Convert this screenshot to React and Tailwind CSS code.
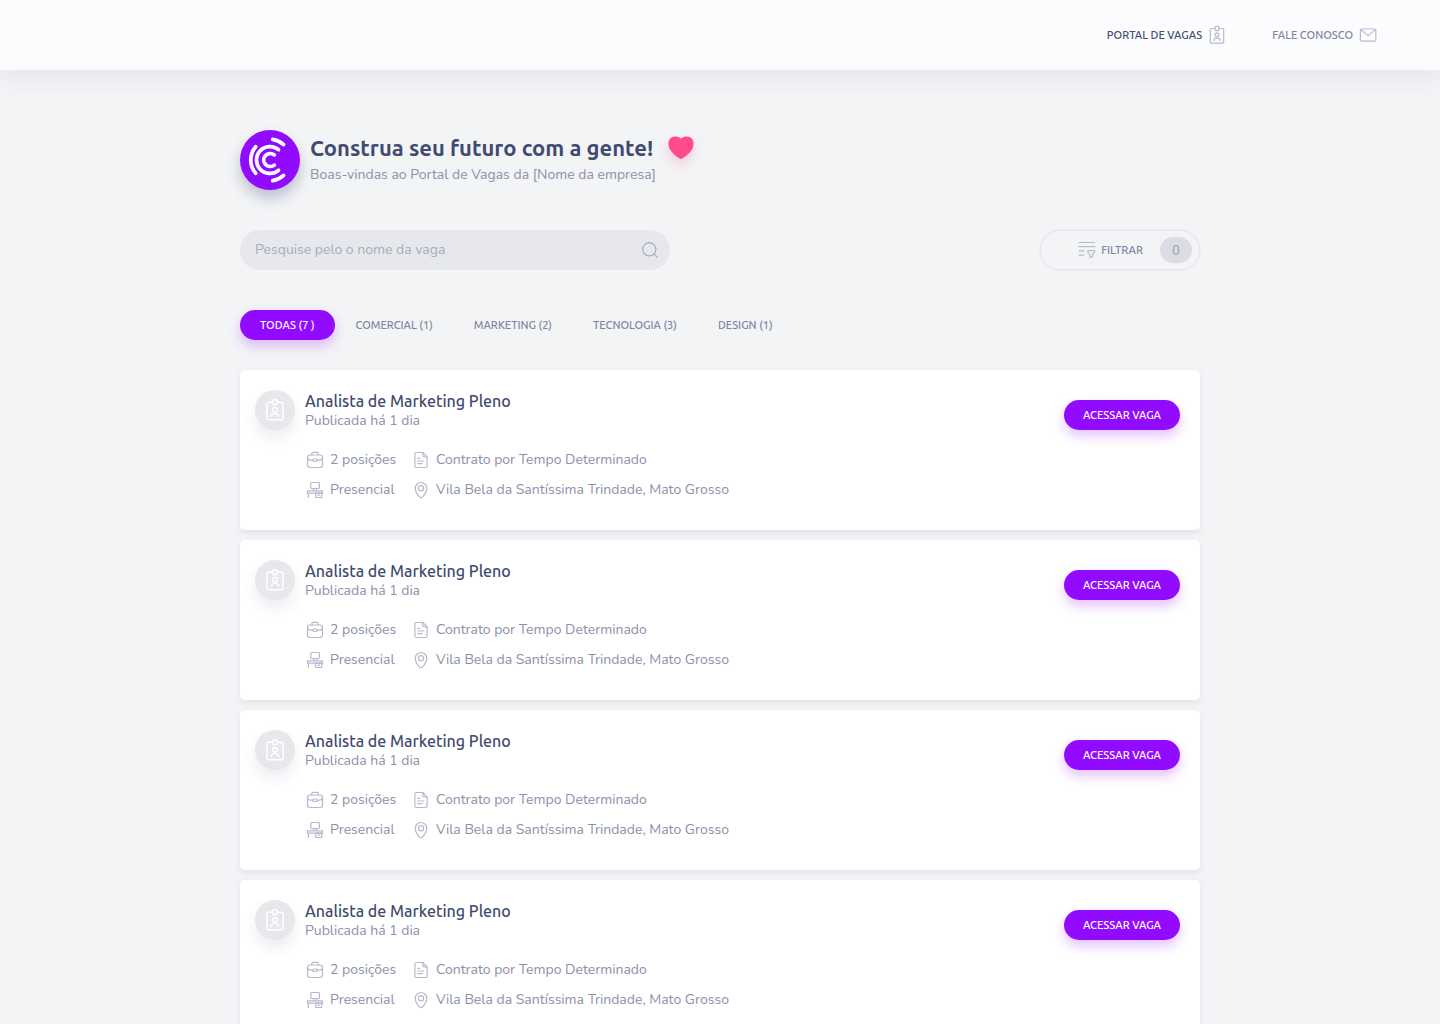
import React, { useState } from 'react';

const TABS = [
    { id: 'todas', label: 'TODAS (7 )' },
    { id: 'comercial', label: 'COMERCIAL (1)' },
    { id: 'marketing', label: 'MARKETING (2)' },
    { id: 'tecnologia', label: 'TECNOLOGIA (3)' },
    { id: 'design', label: 'DESIGN (1)' },
];

const JOBS = Array.from({ length: 4 }, (_, i) => ({
    id: i + 1,
    title: 'Analista de Marketing Pleno',
    published: 'Publicada há 1 dia',
    positions: '2 posições',
    contract: 'Contrato por Tempo Determinado',
    mode: 'Presencial',
    place: 'Vila Bela da Santíssima Trindade, Mato Grosso',
}));

function Icon({ children, className = 'w-5 h-5 text-[#b7bacd]' }) {
    return (
        <svg
            viewBox="0 0 20 20"
            className={`shrink-0 ${className}`}
            fill="none"
            stroke="currentColor"
            strokeWidth="1.2"
            strokeLinecap="round"
            strokeLinejoin="round"
            aria-hidden="true"
        >
            {children}
        </svg>
    );
}

function BadgeIcon({ className }) {
    return (
        <Icon className={className}>
            <path d="M8 3.5H4.6a1.3 1.3 0 0 0-1.3 1.3v12a1.3 1.3 0 0 0 1.3 1.3h10.8a1.3 1.3 0 0 0 1.3-1.3v-12a1.3 1.3 0 0 0-1.3-1.3H12" />
            <rect x="8.1" y="1.4" width="3.8" height="4.2" rx="1.2" />
            <circle cx="10" cy="9.8" r="1.9" />
            <path d="M6.8 15.3c.3-1.7 1.5-2.5 3.2-2.5s2.9.8 3.2 2.5" />
        </Icon>
    );
}

function MailIcon() {
    return (
        <Icon>
            <rect x="2.4" y="4" width="15.4" height="12.2" rx="1.2" />
            <path d="m2.8 4.6 6.5 5.5a1.2 1.2 0 0 0 1.6 0l6.5-5.5" />
        </Icon>
    );
}

function BriefcaseIcon() {
    return (
        <Icon>
            <rect x="2.5" y="5" width="15" height="12.5" rx="2.4" />
            <path d="M6.8 5V3.6c0-.7.5-1.2 1.2-1.2h4c.7 0 1.2.5 1.2 1.2V5" />
            <path d="M2.6 8c.3 1.3 1.2 2.2 2.5 2.2h2.8M12.1 10.2h2.8c1.3 0 2.2-.9 2.5-2.2" />
            <rect x="7.9" y="9" width="4.2" height="2.5" rx="1" />
        </Icon>
    );
}

function ContractIcon() {
    return (
        <Icon>
            <path d="M11.8 2.5H5.4A1.5 1.5 0 0 0 3.9 4v12a1.5 1.5 0 0 0 1.5 1.5h9.2a1.5 1.5 0 0 0 1.5-1.5V6.8z" />
            <path d="M11.8 2.5v3.3c0 .6.4 1 1 1h3.3M6.7 8.4h2M6.7 11h6M6.7 13.6h4.6" />
        </Icon>
    );
}

function DeskIcon() {
    return (
        <Icon>
            <rect x="5.8" y="2.5" width="8.6" height="6" rx="0.8" />
            <path d="M8.7 8.5v2.3M11.5 8.5v2.3M2.4 10.9h15.2v2.3H2.4zM3.4 13.2v4.3" />
            <path d="M10.7 13.2h6v4.3h-6zM13 15.2h1.4" />
        </Icon>
    );
}

function PinIcon() {
    return (
        <Icon>
            <path d="M10 17.7c-1 0-5.8-4.7-5.8-9.3a5.8 5.9 0 0 1 11.6 0c0 4.6-4.8 9.3-5.8 9.3z" />
            <circle cx="10" cy="8.2" r="2.6" />
        </Icon>
    );
}

function FilterIcon() {
    return (
        <Icon>
            <path d="M2.2 2.5h15.6M2.2 6.7h15.6M2.2 10.9h4.6M2.2 15.1h4.6" />
            <path d="M11.3 10.7h5.6c.7 0 1 .8.6 1.4l-1.9 2.3v2.1L13 17.6v-3.2l-2.2-2.3c-.5-.6-.2-1.4.5-1.4z" />
        </Icon>
    );
}

function SearchIcon() {
    return (
        <Icon className="w-5 h-5 text-[#a9adc2]">
            <circle cx="9.3" cy="9.3" r="6.6" />
            <path d="m14.2 14.2 3.2 3.2" />
        </Icon>
    );
}

function Logo() {
    return (
        <div className="w-15 h-15 shrink-0 rounded-full bg-[#920bff] shadow-[0_8px_14px_rgba(63,74,117,0.3)]">
            <svg viewBox="0 0 60 60" className="w-full h-full" fill="none" stroke="#fff" strokeWidth="3.7" strokeLinecap="round" aria-hidden="true">
                <path d="M34.3 24.9A6.5 6.5 0 1 0 34.3 35.1" />
                <path d="M38.5 19.7A13.4 13.4 0 1 0 38.5 40.3" />
                <path d="M15.7 16.8A20 20 0 0 0 15.7 43.2" />
                <path d="M32.7 9.4A21 21 0 0 1 43.6 14.6" />
                <path d="M32.7 50.6A21 21 0 0 0 43.6 45.4" />
            </svg>
        </div>
    );
}

function JobCard({ job }) {
    return (
        <li className="flex items-start bg-white rounded-[5px] pt-5 pb-[25px] pl-[15px] pr-5 shadow-[0_3px_6px_rgba(63,74,117,0.1)]">
            <div className="w-10 h-10 shrink-0 rounded-full bg-[#e7e8ec] flex items-center justify-center shadow-[0_8px_14px_rgba(63,74,117,0.1)]">
                <BadgeIcon className="w-6 h-6 text-white" />
            </div>
            <div className="flex-1 min-w-0 pl-[10px]">
                <h2 className="font-['Ubuntu','Noto_Sans',sans-serif] text-base leading-[22px] font-medium text-[#3f4b70]">{job.title}</h2>
                <p className="text-sm leading-[18px]">{job.published}</p>
                <ul className="mt-[15px] grid grid-cols-[106px_1fr] text-sm leading-[30px]">
                    <li className="flex items-center gap-[5px]"><BriefcaseIcon /> {job.positions}</li>
                    <li className="flex items-center gap-[5px]"><ContractIcon /> {job.contract}</li>
                    <li className="flex items-center gap-[5px]"><DeskIcon /> {job.mode}</li>
                    <li className="flex items-center gap-[5px]"><PinIcon /> {job.place}</li>
                </ul>
            </div>
            <button
                type="button"
                className="mt-[10px] h-[30px] px-[19px] shrink-0 rounded-full bg-[#920bff] text-white font-['Ubuntu','Noto_Sans',sans-serif] text-[11px] font-medium shadow-[0_6px_12px_rgba(146,11,255,0.25)]"
            >
                ACESSAR VAGA
            </button>
        </li>
    );
}

export default function App() {
    const [tab, setTab] = useState('todas');
    const [search, setSearch] = useState('');

    return (
        <div className="min-h-screen bg-[#f3f4f6] font-['Nunito','Noto_Sans',sans-serif] text-[#8c90aa]">
            <header className="h-[70px] px-[62px] flex items-center justify-end bg-linear-to-b from-[#fdfdfe] to-[#fafbfd] shadow-[0_8px_20px_rgba(63,74,117,0.08)]">
                <nav className="flex gap-[45px] font-['Ubuntu','Noto_Sans',sans-serif] text-[11px] font-medium">
                    <a href="#vagas" className="flex items-center gap-[5px] text-[#3f4b70]">
                        PORTAL DE VAGAS <BadgeIcon />
                    </a>
                    <a href="#contato" className="flex items-center gap-[5px] text-[#7f84a1]">
                        FALE CONOSCO <MailIcon />
                    </a>
                </nav>
            </header>

            <main className="max-w-[960px] mx-auto pt-[60px]">
                <div className="flex items-center gap-[10px]">
                    <Logo />
                    <div>
                        <h1 className="flex items-center gap-[15px] font-['Ubuntu','Noto_Sans',sans-serif] text-[22px] leading-[30px] font-bold text-[#3f4b70]">
                            Construa seu futuro com a gente!
                            <svg viewBox="0 0 26 24" className="w-[26px] h-6 drop-shadow-[0_6px_6px_rgba(255,74,139,0.25)]" fill="#ff4a8b" aria-hidden="true">
                                <path d="M13 2.6C11.300 1.100 9.300.5 7.200.5 3.200.5.400 3.500.400 7.500c0 7 6.600 12.200 11.300 15 .8.500 1.800.500 2.600 0 4.700-2.800 11.300-8 11.300-15 0-4-2.800-7-6.800-7-2.100 0-4.100.6-5.800 2.100z" />
                            </svg>
                        </h1>
                        <p className="text-sm leading-6">Boas-vindas ao Portal de Vagas da [Nome da empresa]</p>
                    </div>
                </div>

                <div className="mt-10 flex items-center justify-between">
                    <label className="flex items-center w-[430px] h-10 rounded-full bg-[#e7e8ec] pl-[15px] pr-[10px]">
                        <input
                            type="search"
                            aria-label="Pesquise pelo o nome da vaga"
                            value={search}
                            onChange={(e) => setSearch(e.target.value)}
                            placeholder="Pesquise pelo o nome da vaga"
                            className="flex-1 min-w-0 bg-transparent text-sm outline-none placeholder:text-[#a7abc0]"
                        />
                        <SearchIcon />
                    </label>
                    <button
                        type="button"
                        className="flex items-center justify-end w-40 h-10 pr-[7px] rounded-full border border-[#e5e6eb] ring-1 ring-[#ecedf0] font-['Ubuntu','Noto_Sans',sans-serif] text-[11px] font-medium text-[#7f84a1]"
                    >
                        <FilterIcon />
                        <span className="ml-1">FILTRAR</span>
                        <span className="ml-[17px] w-8 h-[26px] rounded-full bg-[#dcdde4] text-sm leading-[26px] font-normal text-[#9a9eb6]">0</span>
                    </button>
                </div>

                <div className="mt-10 flex gap-px" role="tablist">
                    {TABS.map((t) => (
                        <button
                            key={t.id}
                            type="button"
                            role="tab"
                            aria-selected={tab === t.id}
                            onClick={() => setTab(t.id)}
                            className={`h-[30px] px-5 rounded-full font-['Ubuntu','Noto_Sans',sans-serif] text-[11px] font-medium ${tab === t.id ? 'bg-[#920bff] text-white shadow-[0_6px_12px_rgba(146,11,255,0.25)]' : 'text-[#7f84a1]'}`}
                        >
                            {t.label}
                        </button>
                    ))}
                </div>

                <ul className="mt-[30px] flex flex-col gap-[10px]">
                    {JOBS.map((job) => <JobCard key={job.id} job={job} />)}
                </ul>
            </main>
        </div>
    );
}
